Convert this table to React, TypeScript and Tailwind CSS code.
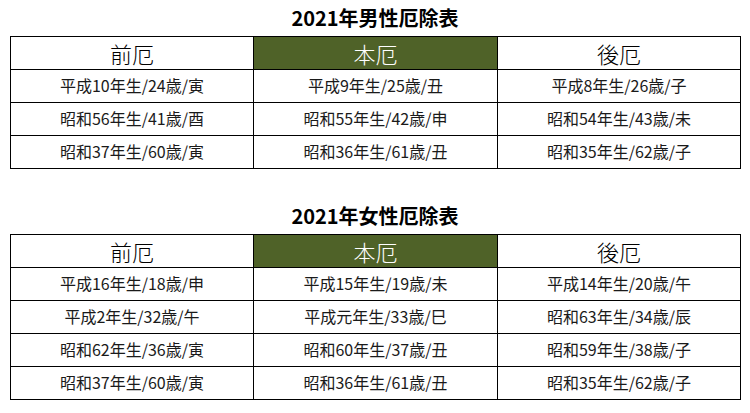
import React from "react";

type Table = { title: string; rows: [string, string, string][] };

const tables: Table[] = [
  {
    title: "2021年男性厄除表",
    rows: [
      ["平成10年生/24歳/寅", "平成9年生/25歳/丑", "平成8年生/26歳/子"],
      ["昭和56年生/41歳/酉", "昭和55年生/42歳/申", "昭和54年生/43歳/未"],
      ["昭和37年生/60歳/寅", "昭和36年生/61歳/丑", "昭和35年生/62歳/子"],
    ],
  },
  {
    title: "2021年女性厄除表",
    rows: [
      ["平成16年生/18歳/申", "平成15年生/19歳/未", "平成14年生/20歳/午"],
      ["平成2年生/32歳/午", "平成元年生/33歳/巳", "昭和63年生/34歳/辰"],
      ["昭和62年生/36歳/寅", "昭和60年生/37歳/丑", "昭和59年生/38歳/子"],
      ["昭和37年生/60歳/寅", "昭和36年生/61歳/丑", "昭和35年生/62歳/子"],
    ],
  },
];

const font = { fontFamily: '"Noto Sans CJK JP", "Noto Sans", sans-serif' };

function YakuTable({ t }: { t: Table }) {
  return (
    <div className="flex flex-col">
      <div className="h-[36px] flex items-center justify-center pb-[1px]">
        <span className="text-[20px] font-bold leading-none text-black">{t.title}</span>
      </div>
      <div className="grid grid-cols-[243px_244px_243px] w-[731px] border-l border-t border-black">
        <div className="h-[33px] border-r border-b border-black flex items-center justify-center text-[22px] font-light leading-none text-black">
          前厄
        </div>
        <div className="h-[33px] border-r border-b border-black bg-[#4f6228] flex items-center justify-center text-[22px] font-light leading-none text-white">
          本厄
        </div>
        <div className="h-[33px] border-r border-b border-black flex items-center justify-center text-[22px] font-light leading-none text-black">
          後厄
        </div>
        {t.rows.map((r, i) =>
          r.map((c, j) => (
            <div
              key={`${i}-${j}`}
              className="h-[33px] border-r border-b border-black flex items-center justify-center text-[16px] leading-none text-[#1a1a1a] pb-[2px]"
            >
              {c}
            </div>
          ))
        )}
      </div>
    </div>
  );
}

export default function App() {
  return (
    <div className="w-[750px] h-[413px] bg-white px-[10px] flex flex-col gap-[29px]" style={font}>
      {tables.map((t) => (
        <YakuTable key={t.title} t={t} />
      ))}
    </div>
  );
}
